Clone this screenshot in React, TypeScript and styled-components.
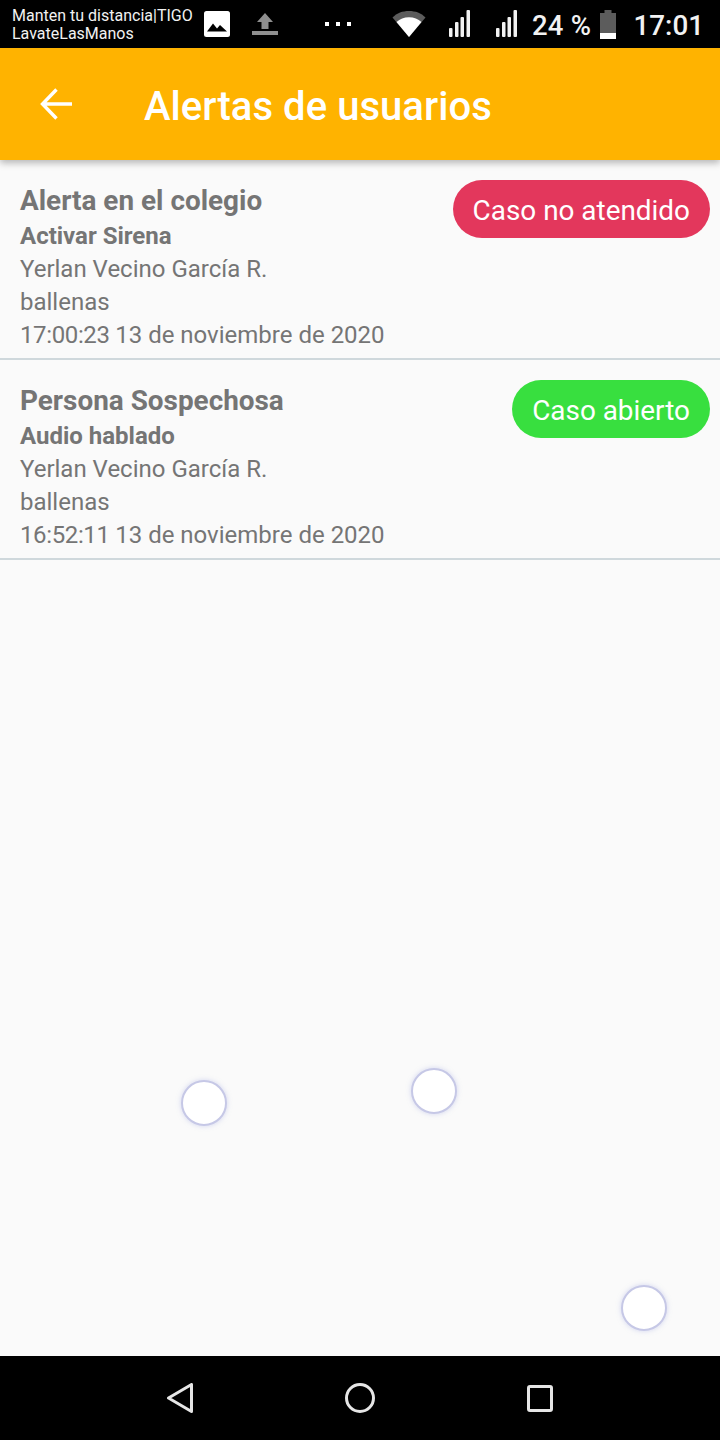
import React from "react";
import styled, { createGlobalStyle } from "styled-components";

const GlobalStyle = createGlobalStyle`
  html, body {
    margin: 0;
    padding: 0;
    background: #fafafa;
    font-family: Roboto, "Liberation Sans", sans-serif;
  }
`;

const Screen = styled.div`
  position: relative;
  display: flex;
  flex-direction: column;
  width: 720px;
  height: 1440px;
  overflow: hidden;
  background: #fafafa;
`;

const StatusBar = styled.div`
  display: flex;
  align-items: center;
  height: 48px;
  padding: 0 16px 0 12px;
  box-sizing: border-box;
  background: #000;
  color: #f2f2f2;
`;

const Carrier = styled.div`
  width: 190px;
  font-size: 16px;
  line-height: 18px;
  padding-top: 1px;
  white-space: nowrap;
`;

const StatusIcons = styled.div`
  display: flex;
  align-items: center;
  flex: 1;
`;

const Slot = styled.div<{ $w: number; $ml: number }>`
  display: flex;
  width: ${(p) => p.$w}px;
  margin-left: ${(p) => p.$ml}px;
`;

const Percent = styled.span`
  margin-left: 13px;
  padding-top: 3px;
  font-size: 27.5px;
  font-weight: 500;
  letter-spacing: 0.2px;
  white-space: nowrap;
`;

const Clock = styled.span`
  margin-left: auto;
  padding-top: 3px;
  font-size: 27.8px;
  font-weight: 500;
`;

const AppBar = styled.header`
  position: relative;
  z-index: 1;
  display: flex;
  align-items: center;
  height: 112px;
  padding-left: 40px;
  box-sizing: border-box;
  background: #ffb300;
  box-shadow: 0 3px 7px rgba(0, 0, 0, 0.28);
`;

const Title = styled.h1`
  margin: 0 0 0 72px;
  padding-top: 4px;
  color: #fff;
  font-size: 40px;
  font-weight: 500;
  letter-spacing: 0.05px;
`;

const List = styled.main`
  flex: 1;
`;

const Row = styled.article`
  display: flex;
  justify-content: space-between;
  height: 200px;
  padding: 21px 10px 0 20px;
  box-sizing: border-box;
  border-bottom: 2px solid #cfd8dc;
`;

const Details = styled.div`
  color: #757575;
  font-size: 24px;
  line-height: 33px;
`;

const AlertName = styled.div`
  font-size: 27.9px;
  line-height: 40px;
  font-weight: 700;
`;

const AlertKind = styled.div`
  font-weight: 700;
  line-height: 30px;
  margin-bottom: 2px;
`;

const TimeOfDay = styled.span`
  letter-spacing: -0.37px;
`;

const Status = styled.div<{ $bg: string }>`
  align-self: flex-start;
  margin-top: -1px;
  height: 58px;
  padding: 0 20px;
  border-radius: 29px;
  background: ${(p) => p.$bg};
  color: #fff;
  font-size: 27.9px;
  line-height: 61px;
  white-space: nowrap;
`;

const Touch = styled.div<{ $x: number; $y: number }>`
  position: absolute;
  left: ${(p) => p.$x - 23}px;
  top: ${(p) => p.$y - 23}px;
  width: 46px;
  height: 46px;
  box-sizing: border-box;
  border: 2px solid #c6c8e6;
  border-radius: 50%;
  background: #fff;
  box-shadow: 0 0 5px rgba(170, 175, 230, 0.5);
`;

const NavBar = styled.nav`
  display: flex;
  align-items: center;
  justify-content: space-between;
  height: 84px;
  padding: 0 167px;
  box-sizing: border-box;
  background: #000;
`;

const alerts = [
  {
    name: "Alerta en el colegio",
    kind: "Activar Sirena",
    clock: "17:00:23",
    date: "13 de noviembre de 2020",
    status: "Caso no atendido",
    color: "#e3375c",
  },
  {
    name: "Persona Sospechosa",
    kind: "Audio hablado",
    clock: "16:52:11",
    date: "13 de noviembre de 2020",
    status: "Caso abierto",
    color: "#38df3f",
  },
];

const Signal = () => (
  <svg width="24" height="28" viewBox="0 0 24 28">
    <g fill="#f2f2f2">
      <rect x="1" y="18" width="3.5" height="9" rx="1" />
      <rect x="7" y="12" width="3.5" height="15" rx="1" />
      <rect x="12.500" y="7" width="3.5" height="20" rx="1" />
      <rect x="18.500" y="0" width="3.5" height="27" rx="1" />
    </g>
  </svg>
);

export default function App() {
  return (
    <Screen>
      <GlobalStyle />
      <StatusBar>
        <Carrier>
          Manten tu distancia|TIGO
          <br />
          LavateLasManos
        </Carrier>
        <StatusIcons>
          <Slot $w={26} $ml={2}>
            <svg width="26" height="26" viewBox="0 0 26 26">
              <rect width="26" height="26" rx="2.5" fill="#fff" />
              <path d="M3 20.5 9 12.5l4 5 3-3.5 7 6.5z" fill="#000" />
            </svg>
          </Slot>
          <Slot $w={26} $ml={22}>
            <svg width="26" height="24" viewBox="0 0 26 24">
              <path d="M13 1 21 10h-4.500v7h-7v-7H5z" fill="#8f8f8f" />
              <rect y="19" width="26" height="4" fill="#8f8f8f" />
            </svg>
          </Slot>
          <Slot $w={26} $ml={47}>
            <svg width="26" height="6" viewBox="0 0 26 6">
              <g fill="#fff">
                <rect x="0" y="1" width="4" height="4" />
                <rect x="11" y="1" width="4" height="4" />
                <rect x="22" y="1" width="4" height="4" />
              </g>
            </svg>
          </Slot>
          <Slot $w={34} $ml={41}>
            <svg width="34" height="28" viewBox="0 0 34 28">
              <path d="M17 27 0.5 7.500C5 3 10.500 1 17 1s12 2 16.500 6.500z" fill="#5c5c5c" />
              <path d="M17 27 4.500 12C8 8.800 12 7.200 17 7.200S26 8.800 29.500 12z" fill="#fff" />
            </svg>
          </Slot>
          <Slot $w={24} $ml={22}>
            <Signal />
          </Slot>
          <Slot $w={24} $ml={23}>
            <Signal />
          </Slot>
          <Percent>24 %</Percent>
          <Slot $w={16} $ml={9}>
            <svg width="16" height="29" viewBox="0 0 16 29">
              <path d="M4.500 0h7v3H16v26H0V3h4.500z" fill="#5c5c5c" />
              <rect y="23" width="16" height="6" fill="#fff" />
            </svg>
          </Slot>
          <Clock>17:01</Clock>
        </StatusIcons>
      </StatusBar>

      <AppBar>
        <svg width="32" height="32" viewBox="0 0 32 32" fill="none">
          <path d="M32 16H3M16.500 1.500 2.500 16l14 14.500" stroke="#fff" strokeWidth="3.400" />
        </svg>
        <Title>Alertas de usuarios</Title>
      </AppBar>

      <List>
        {alerts.map((a) => (
          <Row key={a.name}>
            <Details>
              <AlertName>{a.name}</AlertName>
              <AlertKind>{a.kind}</AlertKind>
              <div>Yerlan Vecino García R.</div>
              <div>ballenas</div>
              <div>
                <TimeOfDay>{a.clock} </TimeOfDay>
                {a.date}
              </div>
            </Details>
            <Status $bg={a.color}>{a.status}</Status>
          </Row>
        ))}
      </List>

      <Touch $x={204} $y={1103} />
      <Touch $x={434} $y={1091} />
      <Touch $x={644} $y={1308} />

      <NavBar>
        <svg width="26" height="30" viewBox="0 0 26 30" fill="none">
          <path d="M24.500 1.500v27L1.500 15z" stroke="#e6e6e6" strokeWidth="3" strokeLinejoin="round" />
        </svg>
        <svg width="30" height="30" viewBox="0 0 30 30" fill="none">
          <circle cx="15" cy="15" r="13.500" stroke="#e6e6e6" strokeWidth="3" />
        </svg>
        <svg width="26" height="27" viewBox="0 0 26 27" fill="none">
          <rect x="1.500" y="1.500" width="23" height="24" rx="1.500" stroke="#e6e6e6" strokeWidth="3" />
        </svg>
      </NavBar>
    </Screen>
  );
}
